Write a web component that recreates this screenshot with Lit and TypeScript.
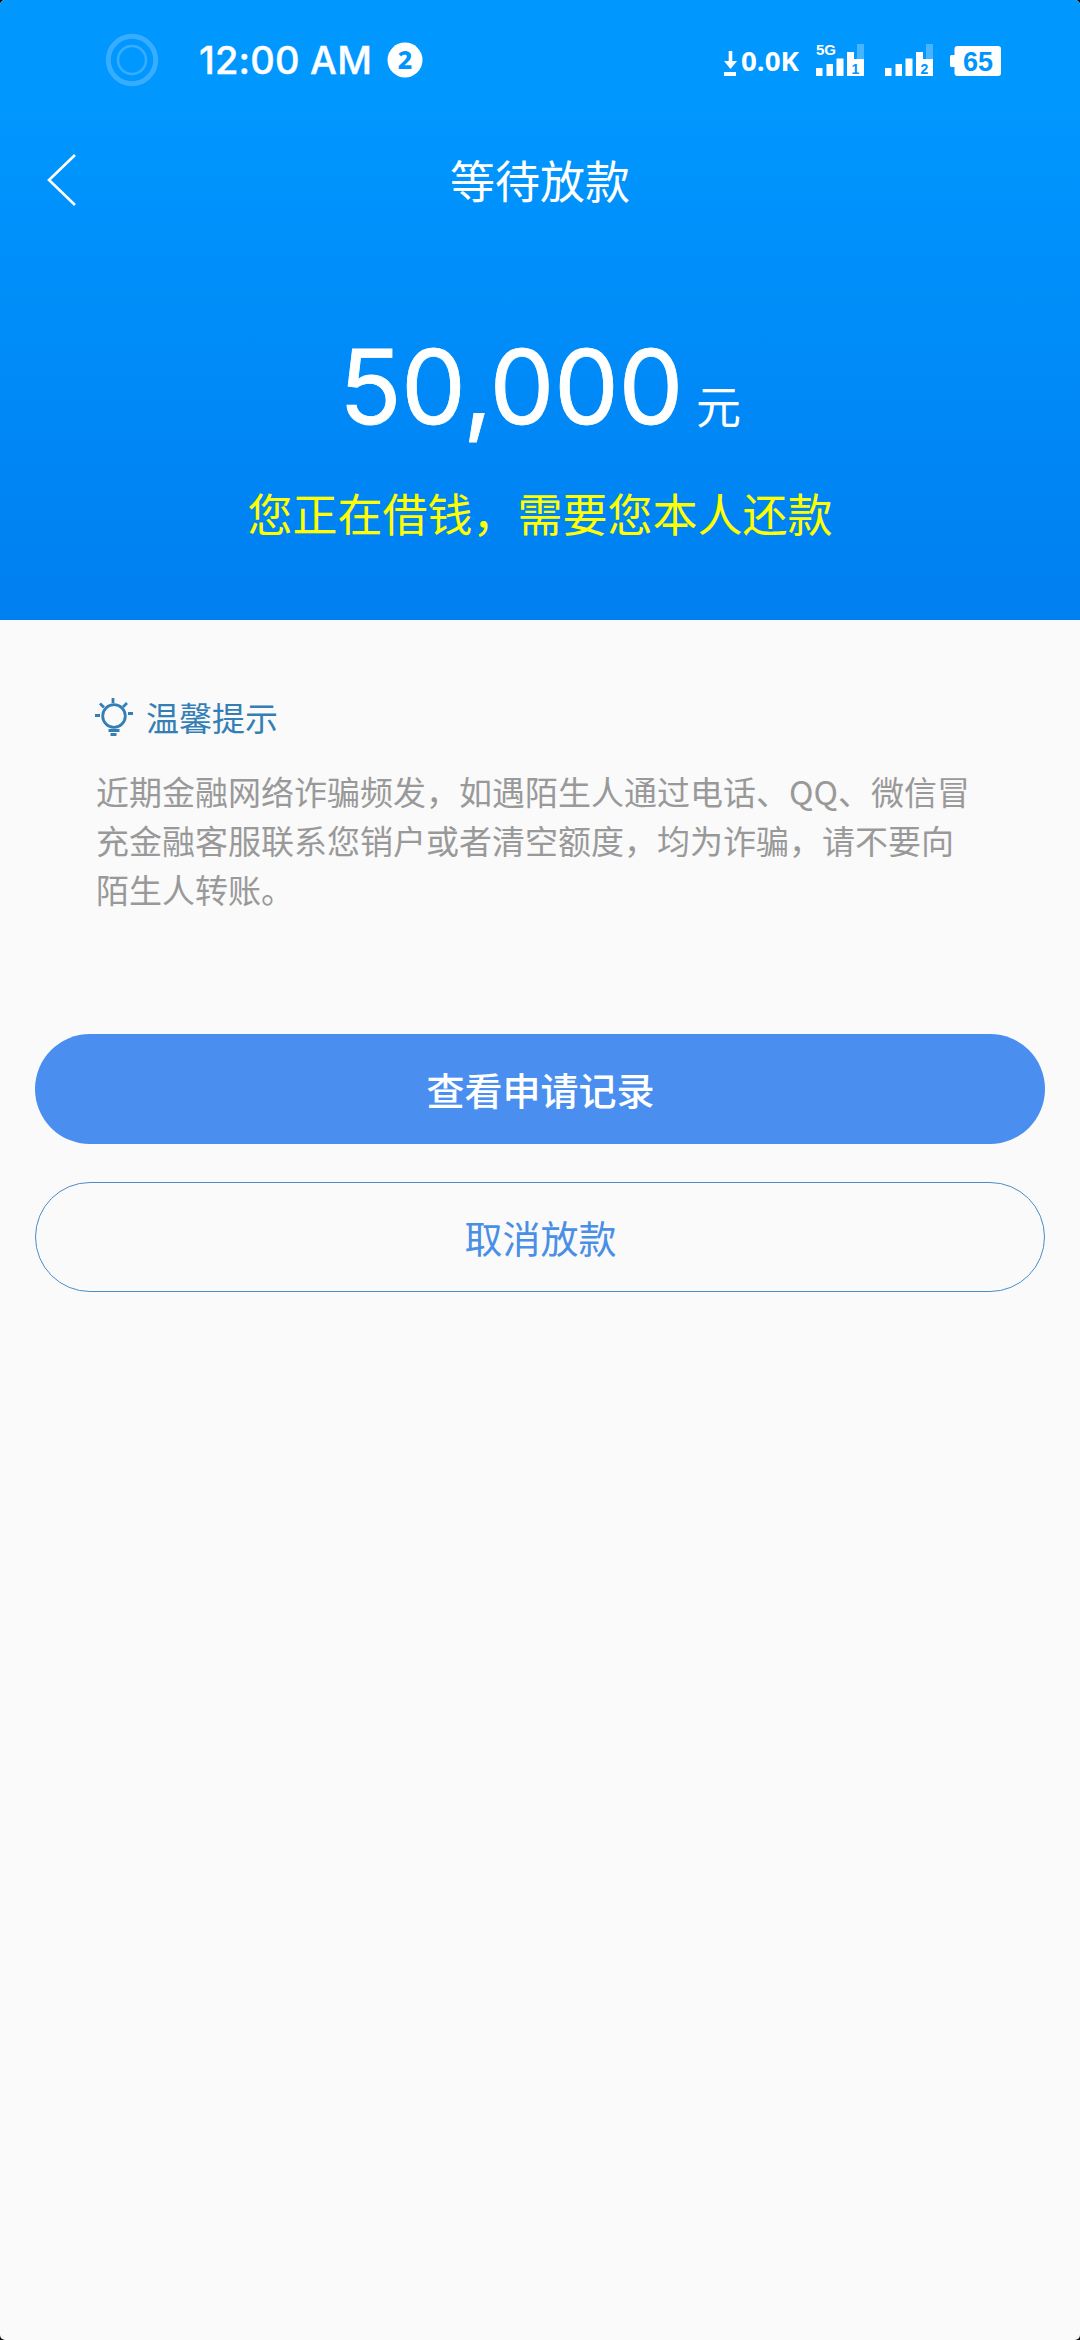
import { LitElement, html, css, svg } from 'lit';
import { customElement, property } from 'lit/decorators.js'

@customElement('status-bar')
export class StatusBar extends LitElement {
    static styles = [
        css`
            :host {
                display: flex;
                align-items: center;
                justify-content: space-between;
                height: 120px;
                padding: 0 79px 0 105px;
                box-sizing: border-box;
                color: #fff;
            }

            svg {
                display: block;
                overflow: visible;
            }

            .left,
            .right {
                display: flex;
                align-items: center;
            }

            .clock {
                margin-left: 40px;
                width: 188px;
                font-family: Inter, sans-serif;
                font-size: 38px;
                font-weight: 500;
                line-height: 54px;
                letter-spacing: 0.2px;
                -webkit-text-stroke: 0.4px #fff;
                white-space: nowrap;
            }

            .badge {
                font: 800 25px 'Noto Sans', sans-serif;
            }

            .speed {
                font: 700 26px 'Open Sans', sans-serif;
            }

            .network {
                font: 700 15px 'Liberation Sans', sans-serif;
            }

            .sim {
                font: 700 14px 'Liberation Sans', sans-serif;
            }

            .level {
                font: 700 27px 'Liberation Sans', sans-serif;
            }
        `
    ];

    signal(sim: string, network = '') {
        return svg`
        <text class="network" x="0" y="12" fill="#fff">${network}</text>
        <path fill="#fff" d="M0 25h6.5v8H0zM10.5 21h6.5v12h-6.5zM20.5 15.500h7v17.500h-7zM31 9h7v7h10v17H31z"/>
        <path fill="#fff" fill-opacity=".28" d="M41 1h7v15h-7z"/>
        <text class="sim" x="39.500" y="30.500" text-anchor="middle" fill="#0094fd">${sim}</text>
        `;
    }

    render() {
        return html`
        <div class="left">
            <svg width="54" height="54" viewBox="0 0 54 54" fill="none" stroke="#fff" stroke-opacity=".22">
                <circle cx="27" cy="27" r="23.700" stroke-width="5"/>
                <circle cx="27" cy="27" r="14" stroke-width="2.500"/>
            </svg>
            <div class="clock">12:00 AM</div>
            <svg width="36" height="36" viewBox="0 0 36 36">
                <circle cx="18" cy="18" r="17.500" fill="#fff"/>
                <text class="badge" x="18" y="27" text-anchor="middle" fill="#0094fd">2</text>
            </svg>
        </div>
        <div class="right">
            <svg width="278" height="34" viewBox="0 0 278 34">
                <path fill="#fff" d="M5.700 8h3.600v10h4.700l-6.500 8-6.500-8h4.700zM1 29h12v4H1z"/>
                <text class="speed" x="18" y="28" fill="#fff" textLength="58" lengthAdjust="spacingAndGlyphs">0.0K</text>
                <g transform="translate(93)">${this.signal('1', '5G')}</g>
                <g transform="translate(162)">${this.signal('2')}</g>
                <rect x="231.500" y="3" width="46.500" height="30" rx="3" fill="#fff"/>
                <rect x="227" y="12" width="7" height="12" rx="1.500" fill="#fff"/>
                <text class="level" x="255" y="27.500" text-anchor="middle" fill="#0094fd">65</text>
            </svg>
        </div>
            `;
    }
}

@customElement('pill-button')
export class PillButton extends LitElement {
    @property({ type: Boolean, reflect: true }) outlined = false;

    static styles = [
        css`
            :host {
                display: block;
            }

            button {
                display: block;
                width: 100%;
                height: 110px;
                box-sizing: border-box;
                padding: 0 0 1px 1px;
                border: none;
                border-radius: 55px;
                background-color: #4a8ff0;
                color: #fff;
                font-family: 'Noto Sans CJK SC', sans-serif;
                font-size: 38px;
                font-weight: 500;
            }

            :host([outlined]) button {
                border: 1px solid #4a8cc8;
                background-color: transparent;
                color: #4a8fe6;
                font-weight: 400;
            }
        `
    ];

    render() {
        return html`<button><slot></slot></button>`;
    }
}

@customElement('app-root')
export class AppRoot extends LitElement {
    static styles = [
        css`
            :host {
                display: block;
                background-color: #000;
                font-family: 'Noto Sans CJK SC', sans-serif;
            }

            .screen {
                height: 2340px;
                border-radius: 5px;
                overflow: hidden;
                background-color: #fafafa;
            }

            header {
                height: 620px;
                background: linear-gradient(#0097ff 0, #0097ff 100px, #007ff0 620px);
                color: #fff;
            }

            nav {
                display: grid;
                grid-template-columns: 120px 1fr 120px;
                align-items: center;
                height: 120px;
            }

            nav svg {
                display: block;
                margin-left: 46px;
            }

            h1 {
                margin: 0;
                font-size: 45px;
                font-weight: 400;
                line-height: 64px;
                text-align: center;
            }

            .amount {
                display: flex;
                justify-content: center;
                align-items: baseline;
                gap: 13px;
                padding-top: 77px;
                line-height: 140px;
            }

            .number {
                font-family: Inter, sans-serif;
                font-size: 103px;
                letter-spacing: -0.5px;
                -webkit-text-stroke: 0.8px #fff;
            }

            .unit {
                font-size: 45px;
            }

            .notice {
                margin-top: 5px;
                color: #ff0;
                font-size: 45px;
                line-height: 66px;
                text-align: center;
            }

            .tips {
                padding: 72px 96px 0 95px;
            }

            .tips-title {
                display: flex;
                align-items: center;
                gap: 12px;
                color: #337fb5;
                font-size: 33px;
                line-height: 50px;
            }

            .tips p {
                margin: 25px 0 0 1px;
                color: #999;
                font-size: 33px;
                line-height: 49px;
            }

            .actions {
                display: flex;
                flex-direction: column;
                gap: 38px;
                padding: 120px 35px 0;
            }
        `
    ];

    render() {
        return html`
        <div class="screen">
            <header>
                <status-bar></status-bar>
                <nav>
                    <svg width="32" height="54" viewBox="0 0 32 54" fill="none" stroke="#fff" stroke-width="2.600">
                        <path d="M29 2 3 27l26 25"/>
                    </svg>
                    <h1>等待放款</h1>
                </nav>
                <div class="amount">
                    <span class="number">50,000</span>
                    <span class="unit">元</span>
                </div>
                <div class="notice">您正在借钱，需要您本人还款</div>
            </header>
            <section class="tips">
                <div class="tips-title">
                    <svg width="39" height="40" viewBox="0 0 39 40" fill="none" stroke="currentColor" stroke-width="2.800">
                        <circle cx="19" cy="19" r="11.300"/>
                        <path d="M18 1v5M5 6.500l4 4M32 6l-4 4M0 18.500h5M33 16.500h5M13.500 33.500h11M15.500 37.500h6"/>
                    </svg>
                    <span>温馨提示</span>
                </div>
                <p>近期金融网络诈骗频发，如遇陌生人通过电话、QQ、微信冒充金融客服联系您销户或者清空额度，均为诈骗，请不要向陌生人转账。</p>
            </section>
            <div class="actions">
                <pill-button>查看申请记录</pill-button>
                <pill-button outlined>取消放款</pill-button>
            </div>
        </div>
            `;
    }
}
